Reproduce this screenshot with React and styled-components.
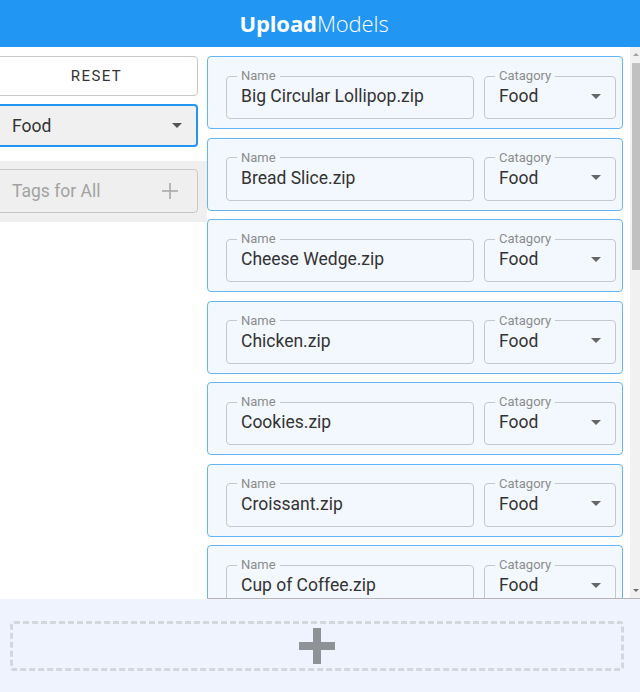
import styled, { createGlobalStyle } from 'styled-components';

const GlobalStyle = createGlobalStyle`
  html, body {
    margin: 0;
    padding: 0;
    overflow: hidden;
  }
  body {
    font-family: Roboto, "Liberation Sans", sans-serif;
    color: #333;
  }
`;

const foods = [
  'Big Circular Lollipop.zip',
  'Bread Slice.zip',
  'Cheese Wedge.zip',
  'Chicken.zip',
  'Cookies.zip',
  'Croissant.zip',
  'Cup of Coffee.zip',
  'Donut.zip',
  'Egg.zip',
  'Fish.zip',
  'French Fries.zip',
  'Hamburger.zip',
  'Hot Dog.zip',
  'Ice Cream.zip',
  'Pizza.zip',
  'Sandwich.zip',
  'Watermelon.zip',
];

const Page = styled.div`
  display: flex;
  flex-direction: column;
  height: 692px;
  width: 640px;
  background: #fff;
`;

const Header = styled.header`
  height: 47px;
  flex: none;
  background: #2196f3;
  display: flex;
  align-items: center;
  justify-content: center;
  font-family: "Open Sans", "Liberation Sans", sans-serif;
  font-size: 22px;
  color: #fff;
  padding-right: 12px;
  padding-bottom: 2px;
  box-sizing: border-box;
  letter-spacing: -0.1px;
`;

const Brand = styled.span`
  font-weight: ${p => (p.$bold ? 700 : 300)};
`;

const Main = styled.div`
  flex: 1;
  min-height: 0;
  display: flex;
`;

const Sidebar = styled.aside`
  width: 207px;
  flex: none;
  display: flex;
  flex-direction: column;
  padding-top: 9px;
`;

const Controls = styled.div`
  display: flex;
  flex-direction: column;
  gap: 8px;
  margin-left: -5px;
  margin-right: 9px;
`;

const ResetButton = styled.button`
  height: 40px;
  background: #fff;
  border: 1px solid #c8c8c8;
  border-radius: 4px;
  font-family: Roboto, "Liberation Sans", sans-serif;
  font-size: 15px;
  letter-spacing: 1.4px;
  color: #333;
  padding: 0;
`;

const SelectBox = styled.div`
  height: 43px;
  box-sizing: border-box;
  display: flex;
  align-items: center;
  justify-content: space-between;
  background: #f0f0f0;
  border: ${p => (p.$focused ? '2px solid #2196f3' : '1px solid #c4c4c4')};
  border-radius: 4px;
  padding: 0 14px 0 15px;
  font-size: 17.5px;
  color: #333;
`;

const Caret = styled.span`
  width: 0;
  height: 0;
  border-left: 5px solid transparent;
  border-right: 5px solid transparent;
  border-top: 5px solid ${p => p.$color || '#666'};
`;

const TagBand = styled.div`
  margin-top: 14px;
  background: #efefef;
  padding: 8px 9px 9px 0;
`;

const TagField = styled.div`
  height: 44px;
  box-sizing: border-box;
  margin-left: -5px;
  border: 1px solid #c8c8c8;
  border-radius: 4px;
  display: flex;
  align-items: center;
  justify-content: space-between;
  padding: 0 19px 0 16px;
  font-size: 17.5px;
  color: #a2a2a2;
`;

const ListArea = styled.div`
  flex: 1;
  min-width: 0;
  display: flex;
  border-bottom: 1px solid #b4b4b4;
`;

const List = styled.div`
  flex: 1;
  min-width: 0;
  overflow: hidden;
  display: flex;
  flex-direction: column;
  gap: 8.5px;
  padding: 9px 7px 9px 0;
`;

const Rail = styled.div`
  width: 10px;
  flex: none;
  display: flex;
  flex-direction: column;
  background: #f1f1f1;
`;

const RailButton = styled.div`
  height: 15px;
  flex: none;
  display: flex;
  justify-content: center;
  align-items: center;
  padding-left: 2px;
`;

const RailArrow = styled.span`
  width: 0;
  height: 0;
  border-left: 3px solid transparent;
  border-right: 3px solid transparent;
  ${p =>
    p.$up
      ? 'border-bottom: 3px solid #a3a3a3;'
      : 'border-top: 3px solid #707070;'}
`;

const RailTrack = styled.div`
  flex: 1;
  padding-top: 1px;
`;

const Thumb = styled.div`
  height: 207px;
  margin-left: 2px;
  background: #c1c1c1;
`;

const FileCard = styled.div`
  flex: none;
  display: flex;
  gap: 10px;
  background: #f3f8fe;
  border: 1px solid #64b5f6;
  border-radius: 4px;
  padding: 13px 6px 9px 18px;
`;

const Field = styled.fieldset`
  margin: 0;
  min-width: 0;
  flex: ${p => (p.$grow ? 1 : 'none')};
  width: ${p => (p.$grow ? 'auto' : '132px')};
  box-sizing: border-box;
  border: 1px solid #c4c8ce;
  border-radius: 4px;
  padding: 4px 14px 12px 14px;
`;

const Label = styled.legend`
  font-size: 13px;
  line-height: 12px;
  color: #8c8c8c;
  padding: 0 4px;
  margin-left: -4px;
`;

const FieldValue = styled.div`
  display: flex;
  align-items: center;
  justify-content: space-between;
  font-size: 17.5px;
  line-height: 20px;
  color: #333;
  white-space: nowrap;
`;

const Footer = styled.div`
  height: 93px;
  flex: none;
  box-sizing: border-box;
  background: #eff3fd;
  padding: 22px 16px 21px 10px;
`;

const DropZone = styled.div`
  height: 100%;
  box-sizing: border-box;
  border: 3px dashed #d3d6dc;
  border-radius: 4px;
  display: flex;
  align-items: center;
  justify-content: center;
`;

const PlusIcon = ({ size, stroke, color }) => (
  <svg width={size} height={size} viewBox={`0 0 ${size} ${size}`}>
    <rect x={(size - stroke) / 2} y="0" width={stroke} height={size} fill={color} />
    <rect x="0" y={(size - stroke) / 2} width={size} height={stroke} fill={color} />
  </svg>
);

const App = () => (
  <Page>
    <GlobalStyle />
    <Header>
      <Brand $bold>Upload</Brand>
      <Brand>Models</Brand>
    </Header>
    <Main>
      <Sidebar>
        <Controls>
          <ResetButton>RESET</ResetButton>
          <SelectBox $focused>
            <span>Food</span>
            <Caret $color="#555" />
          </SelectBox>
        </Controls>
        <TagBand>
          <TagField>
            <span>Tags for All</span>
            <PlusIcon size={16} stroke={1.6} color="#a8a8a8" />
          </TagField>
        </TagBand>
      </Sidebar>
      <ListArea>
        <List>
          {foods.map(name => (
            <FileCard key={name}>
              <Field $grow>
                <Label>Name</Label>
                <FieldValue>{name}</FieldValue>
              </Field>
              <Field>
                <Label>Catagory</Label>
                <FieldValue>
                  <span>Food</span>
                  <Caret />
                </FieldValue>
              </Field>
            </FileCard>
          ))}
        </List>
        <Rail>
          <RailButton>
            <RailArrow $up />
          </RailButton>
          <RailTrack>
            <Thumb />
          </RailTrack>
          <RailButton>
            <RailArrow />
          </RailButton>
        </Rail>
      </ListArea>
    </Main>
    <Footer>
      <DropZone>
        <PlusIcon size={36} stroke={8} color="#8f9397" />
      </DropZone>
    </Footer>
  </Page>
);

export default App;
